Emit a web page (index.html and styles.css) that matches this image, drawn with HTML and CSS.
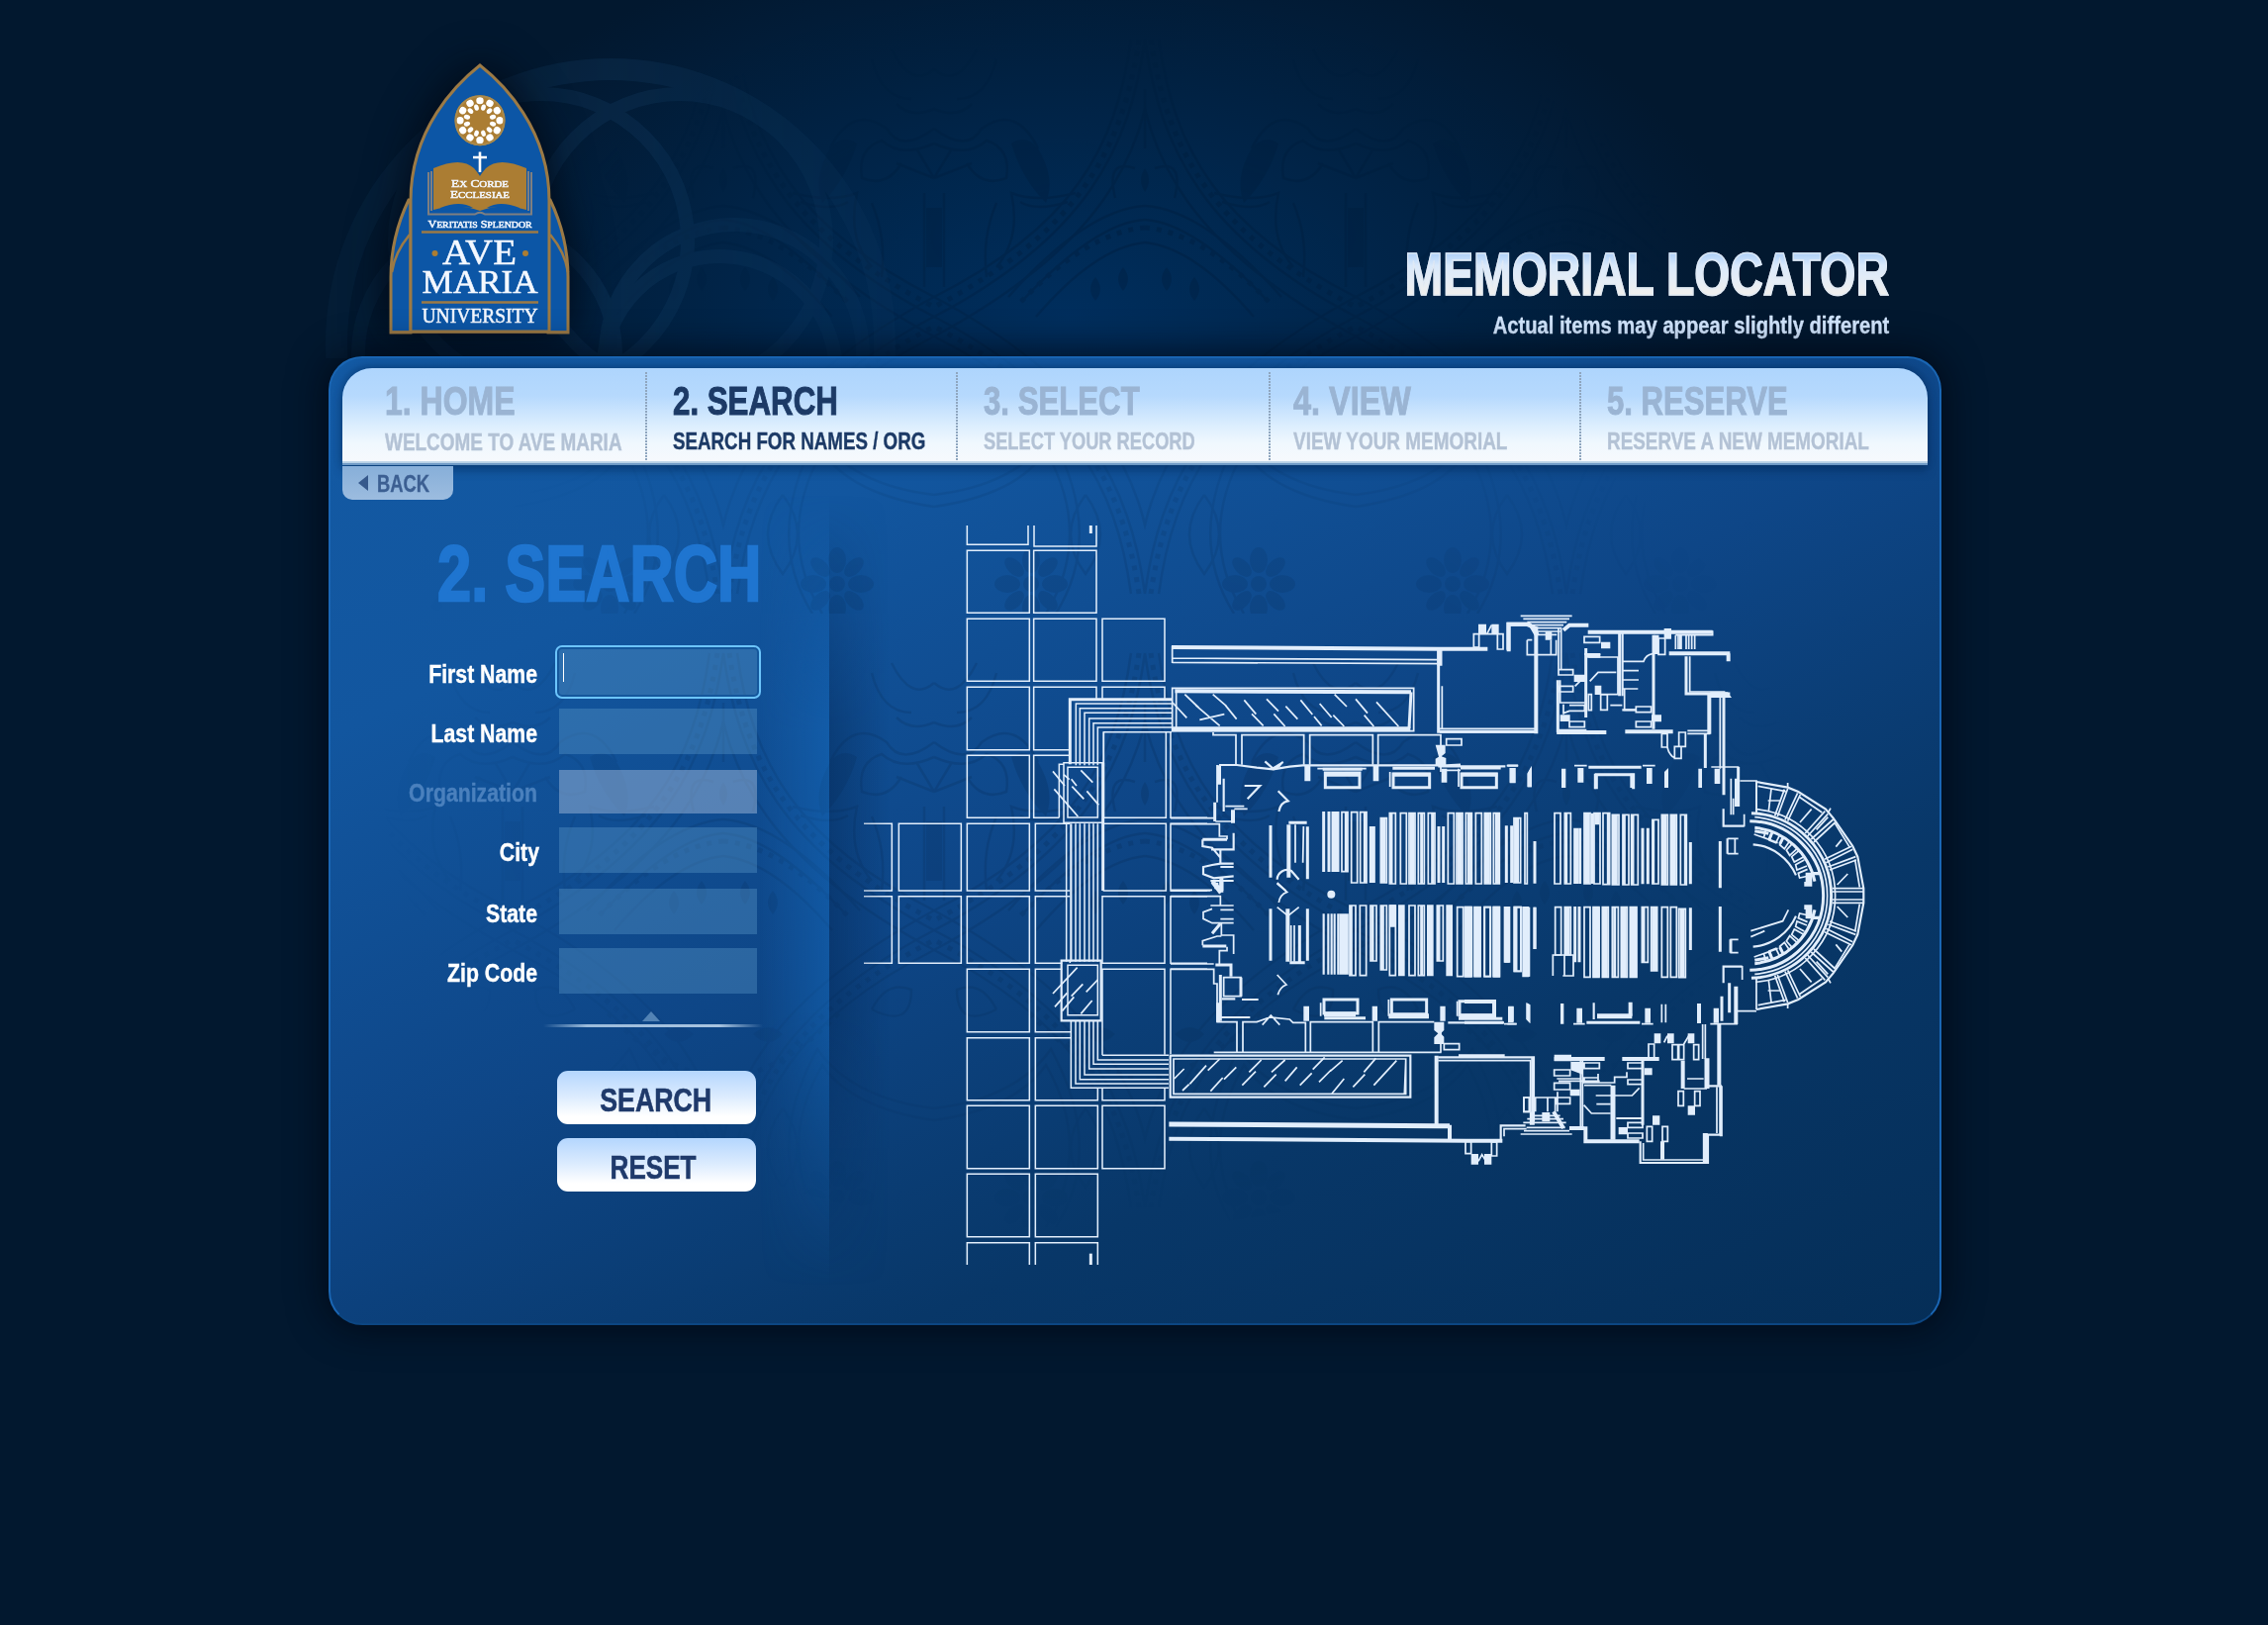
FILE: index.html
```html
<!DOCTYPE html>
<html lang="en">
<head>
<meta charset="utf-8">
<title>Memorial Locator</title>
<link rel="stylesheet" href="styles.css">
</head>
<body>
<svg class="backdrop" width="2292" height="1642" aria-hidden="true">
  <defs>
    <pattern id="damask" width="426" height="620" patternUnits="userSpaceOnUse" patternTransform="translate(731 0)">
      <g id="damask-half" class="damask-lines">
        <path d="M0 40C15 150 60 240 213 320C60 400 15 490 0 600M14 40C29 150 74 230 213 300M-8 60C1 160 46 250 213 340M14 600C29 490 74 410 213 340M-8 580C1 480 46 390 213 300"/>
        <path class="dots" d="M6 40C22 150 67 235 213 310M6 600C22 490 67 405 213 330M0 230Q60 235 130 310M0 470Q60 465 120 400"/>
        <path d="M0 208Q60 212 138 300M0 222Q50 225 125 305M0 245Q50 250 110 320M70 195Q110 205 135 195Q125 240 150 270M78 204Q110 214 126 204"/>
        <path d="M213 130Q180 155 165 130Q130 105 108 150M213 145Q180 160 160 142Q135 150 140 180Q165 190 180 165M213 180L195 150M213 180L175 165M203 195V290M150 205Q165 240 160 280M213 110Q190 120 175 105"/>
        <path d="M0 90V150M10 170Q40 160 30 200M170 50Q190 90 213 70M150 60Q160 100 190 100M60 500Q90 540 60 580Q30 540 60 500M150 400Q165 370 190 380Q190 420 150 400"/>
        <path d="M90 620Q40 540 95 440Q130 490 213 500M100 620Q52 540 100 456Q130 500 213 512"/>
        <g class="damask-fill">
          <circle cx="115" cy="590" r="8"/><ellipse cx="115" cy="566" rx="9" ry="13"/><ellipse cx="115" cy="614" rx="9" ry="13"/><ellipse cx="91" cy="590" rx="13" ry="9"/><ellipse cx="139" cy="590" rx="13" ry="9"/>
          <ellipse cx="115" cy="566" rx="7" ry="12" transform="rotate(45 115 590)"/><ellipse cx="115" cy="566" rx="7" ry="12" transform="rotate(135 115 590)"/><ellipse cx="115" cy="566" rx="7" ry="12" transform="rotate(225 115 590)"/><ellipse cx="115" cy="566" rx="7" ry="12" transform="rotate(315 115 590)"/>
          <path d="M108 150Q90 180 100 205Q125 180 135 145Q120 135 108 150ZM0 170q8 12 0 24zM22 270q10 12 0 24q-10-12 0-24M50 280q10 12 0 24q-10-12 0-24M205 210h8v60h-8zM30 425q16-14 30 0q-14 16-30 0"/>
        </g>
      </g>
      <use href="#damask-half" transform="translate(426 0) scale(-1 1)"/>
    </pattern>
    <pattern id="panel-pattern" href="#damask" patternTransform="translate(397 -362)"/>
    <clipPath id="header-clip"><rect width="2292" height="362"/></clipPath>
    <radialGradient id="fade"><stop offset="0" stop-color="#fff"/><stop offset=".5" stop-color="#aaa"/><stop offset="1" stop-color="#000"/></radialGradient>
    <linearGradient id="rose-fade" x1="0" y1="0" x2="1" y2="0"><stop offset="0" stop-color="#777"/><stop offset=".5" stop-color="#fff"/><stop offset="1" stop-color="#666"/></linearGradient>
    <mask id="header-mask"><ellipse cx="1130" cy="240" rx="560" ry="230" fill="url(#fade)"/></mask>
    <mask id="rose-mask"><rect x="320" y="40" width="600" height="330" fill="url(#rose-fade)"/></mask>
  </defs>
  <g clip-path="url(#header-clip)">
    <rect class="header-damask" width="2292" height="362" fill="url(#damask)" mask="url(#header-mask)"/>
    <g mask="url(#rose-mask)">
      <g class="rose" transform="translate(617 347)">
        <circle r="277" stroke-width="22"/>
        <g stroke-width="14">
          <circle cx="-70" cy="-104" r="148"/><circle cx="70" cy="-104" r="148"/><circle cx="125" cy="10" r="130"/><circle cx="-125" cy="10" r="130"/><circle cx="110" cy="30" r="118"/>
        </g>
      </g>
    </g>
  </g>
</svg>

<div class="stage">
  <header class="header">
    <svg class="logo" viewBox="390 60 190 282" width="190" height="282" role="img" aria-label="Ave Maria University">
      <defs>
        <g id="petals"><ellipse cy="-20" rx="3.700" ry="3.600"/><ellipse cy="-13.500" rx="2.300" ry="3.200" transform="rotate(15)"/></g>
      </defs>
      <path class="arch" d="M413 202C402 225 395 250 395 280V336H415V202ZM556 202C567 225 574 250 574 280V336H554V202Z"/>
      <path class="arch" d="M485 66C462 84 415 130 415 203V335H555V203C555 130 508 84 485 66Z"/>
      <path class="gold-line" d="M414 237Q399 255 396 275M556 237Q571 255 574 275M394 335.500H575"/>
      <g transform="translate(485 121.700)">
        <circle class="gold" r="25.500"/>
        <g class="white">
          <use href="#petals"/><use href="#petals" transform="rotate(30)"/><use href="#petals" transform="rotate(60)"/><use href="#petals" transform="rotate(90)"/><use href="#petals" transform="rotate(120)"/><use href="#petals" transform="rotate(150)"/><use href="#petals" transform="rotate(180)"/><use href="#petals" transform="rotate(210)"/><use href="#petals" transform="rotate(240)"/><use href="#petals" transform="rotate(270)"/><use href="#petals" transform="rotate(300)"/><use href="#petals" transform="rotate(330)"/>
        </g>
        <circle class="gold-ring" r="24.500"/>
      </g>
      <path class="book-edge" d="M433 174V216.500H480Q485 213 490 216.500H537V174M436 173V213M534 173V213"/>
      <path class="gold" d="M438 170Q466 158 479 170Q484 176 485 178Q486 176 491 170Q504 158 532 170V212Q505 205 485 213Q465 205 438 212Z"/>
      <path class="blue" d="M445 210Q465 202 478 210Q462 208 445 213ZM525 210Q505 202 492 210Q508 208 525 213Z"/>
      <path class="cross" d="M485 153.500V174M478 159H492"/>
      <g class="crest-text">
        <text x="485" y="189" font-size="11" textLength="58" lengthAdjust="spacingAndGlyphs">E<tspan font-size="9">X</tspan> C<tspan font-size="9">ORDE</tspan></text>
        <text x="485" y="200" font-size="11" textLength="60" lengthAdjust="spacingAndGlyphs">E<tspan font-size="9">CCLESIAE</tspan></text>
        <text x="485" y="229.500" font-size="11" textLength="105" lengthAdjust="spacingAndGlyphs">V<tspan font-size="9">ERITATIS</tspan> S<tspan font-size="9">PLENDOR</tspan></text>
        <text x="484.500" y="267" font-size="35" textLength="75" lengthAdjust="spacingAndGlyphs">AVE</text>
        <text x="485" y="295.500" font-size="33" textLength="117" lengthAdjust="spacingAndGlyphs">MARIA</text>
        <text x="485" y="326" font-size="20.500" textLength="117" lengthAdjust="spacingAndGlyphs">UNIVERSITY</text>
      </g>
      <path class="gold-line" d="M426 234.500H544M426 305.500H544"/>
      <circle class="gold" cx="439.500" cy="256" r="3"/><circle class="gold" cx="531" cy="256" r="3"/>
    </svg>
    <div class="titles">
      <h1 class="title">MEMORIAL LOCATOR</h1>
      <p class="subtitle">Actual items may appear slightly different</p>
    </div>
  </header>

  <main class="panel">
    <svg class="panel-damask" aria-hidden="true"><defs><radialGradient id="pfade"><stop offset="0" stop-color="#fff"/><stop offset=".55" stop-color="#aaa"/><stop offset="1" stop-color="#000"/></radialGradient><mask id="pmask"><ellipse cx="760" cy="420" rx="720" ry="470" fill="url(#pfade)"/></mask></defs><rect width="1626" height="975" fill="url(#panel-pattern)" mask="url(#pmask)"/></svg>
    <nav class="steps">
      <a class="step step-home"><strong>1. HOME</strong><span>WELCOME TO AVE MARIA</span></a>
      <a class="step step-search active"><strong>2. SEARCH</strong><span>SEARCH FOR NAMES / ORG</span></a>
      <a class="step step-select"><strong>3. SELECT</strong><span>SELECT YOUR RECORD</span></a>
      <a class="step step-view"><strong>4. VIEW</strong><span>VIEW YOUR MEMORIAL</span></a>
      <a class="step step-reserve"><strong>5. RESERVE</strong><span>RESERVE A NEW MEMORIAL</span></a>
    </nav>
    <div class="content">
      <section class="finder">
        <a class="back"><i class="back-arrow"></i><span>BACK</span></a>
        <h2 class="heading">2. SEARCH</h2>
        <form class="form">
          <div class="row focus"><label>First Name</label><div class="field"><i class="caret"></i></div></div>
          <div class="row"><label>Last Name</label><div class="field"></div></div>
          <div class="row disabled"><label>Organization</label><div class="field"></div></div>
          <div class="row city"><label>City</label><div class="field"></div></div>
          <div class="row state"><label>State</label><div class="field"></div></div>
          <div class="row"><label>Zip Code</label><div class="field"></div></div>
          <div class="fold"><i class="fold-arrow"></i><i class="fold-line"></i></div>
          <div class="actions">
            <button type="button"><span>SEARCH</span></button>
            <button type="button" class="reset"><span>RESET</span></button>
          </div>
        </form>
      </section>

      <svg class="plan" viewBox="860 520 1040 770" width="1040" height="770" role="img" aria-label="Church floor plan">
        <!-- west plaza, upper half -->
        <g transform="translate(860 520) scale(.33333)">
          <path class="tile" d="M352 33V91H537V33M555 33V96H744V33M352 109H541V298H352ZM554 109H744V298H554ZM352 316H541V505H352ZM554 316H744V505H554ZM762 316H951V505H762ZM352 523H541V713H352ZM664 713H554V523H744V558M762 558V523H951V558M352 730H541V919H352ZM664 730H554V919H631M39 937H124V1140H39M145 937H334V1140H145ZM352 937H541V1140H352ZM664 937H559V1140H664M766 659V919H955V659M969 659V919H1080M764 937H955V1140H764M1080 937H969V1140H1080"/>
          <path class="tile" d="M682 760V573H972M694 760V587H972M708 760V601H972M722 760V618H972M735 760V632H972M748 760V645H972M766 919V659H972M645 752H764V934H645ZM657 766H748V918H657ZM645 757H631V919M653 937V1355M681 937V1355M694 937V1355M708 937V1355M722 937V1355M735 937V1355M748 937V1355"/>
          <path class="w8" d="M664 757V560H972M727 33V57M764 752V1140"/>
          <path class="w6" d="M667 937V1355"/>
          <path d="M612 778L648 822M645 788L662 803M668 802L684 822M697 775L733 812M616 832L688 915M670 824L706 862M715 838L751 880"/>
        </g>
        <!-- west plaza, lower half -->
        <g transform="translate(860 900) scale(.33333)">
          <path class="tile" d="M39 17H124V220H39M145 17H334V220H145ZM352 17H541V220H352ZM664 17H559V220H640M762 17H951V220H762ZM1080 17H969V220H1080M352 238H541V428H352ZM640 238H559V428H667M762 499V238H951V497M969 495V238H1080M352 446H541V635H352ZM667 446H559V635H748V600M762 600V635H951V600M352 652H541V842H352ZM559 652H748V842H559ZM762 652H951V842H762ZM352 859H541V1049H352ZM559 859H748V1049H559ZM352 1134V1067H541V1134M559 1134V1067H748V1134"/>
          <path class="tile" d="M667 396V598H963M681 396V585H963M694 396V572H963M708 396V558H963M722 396V540H963M735 396V526H963M748 396V513H963M762 499H963M657 226H748V377H657ZM664 219V212"/>
          <path class="w6" d="M638 212H758V394H638Z"/><path class="w8" d="M727 1100V1134"/>
          <path d="M612 312L686 233M668 320L703 283M713 307L748 270M618 352L655 310M640 365L676 322M697 373L731 333"/>
        </g>
        <!-- north aisle and nave -->
        <g transform="translate(1170 600) scale(.33333)">
          <path d="M44 158V210M44 195L848 200M44 208L848 212M862 280V408M850 409H1145M44 286H776V416H44ZM56 300V408M168 420V428H237V518M255 518V428H443V518M461 518V428H652V518M668 518V428H858V540M39 680H172M39 698H187V735H210V745M39 898H165M180 519V632M205 644H262M232 652H272M175 690H232M417 700V815M442 705L440 815M855 420H1150M875 440H921V459H875ZM958 122H974V162H958ZM1030 122H1047V168H1030ZM974 122H1030M998 122L1012 95M484 530H632M704 585V540M912 585V530M875 535H918"/>
          <path class="w6" d="M186 519H240L300 527L350 532L400 524L440 520H845L875 520L918 518M200 560V660M325 508L352 532L380 510M263 582H310L272 622M365 598L395 628Q372 632 367 660M362 866A30 30 0 0 1 405 840L428 866M362 878L388 900M850 523H1054M1060 521H1092M136 745V765L165 770L190 800M162 775H230V725M190 775V818H230M190 828H230M190 818L165 822L138 828V850L170 862L230 856M160 870H230"/>
          <path class="w8" d="M851 165V418H1150M768 298L762 408M136 745H210M173 632V690M397 694H452M454 706V865M342 702V860M508 543H612V587H508ZM714 546H824V587H714ZM921 546H1027V587H921ZM712 529H840M918 528H1040M500 532H620"/>
          <path class="w11" d="M42 162L850 167H1000M52 295L768 298M1147 100V424M397 700V860M1064 175V92H1118L1147 105M186 520V578M228 655V695M193 860V900M165 872L190 896M505 548H614M712 548H826M919 548H1030"/>
          <path class="w14" d="M42 410H766M855 165V218"/>
          <path class="solid" d="M972 92h24v30h-24zM1012 92h22v30h-22zM445 522h18v46h-18zM653 520h17v48h-17zM860 530h17v42h-17zM1067 528h17v44h-17zM1122 545L1134 522V586H1122ZM842 458h30v25l-12 10l14 5v22h-32v-20l10-6zM345 528L380 507Q375 530 350 535Z"/>
          <path d="M82 305L124 345M115 338L188 400M167 305L208 340M205 338L239 380M262 322L298 365M285 364L320 400M330 319L366 356M352 364L386 402M388 341L424 380M433 322L469 366M474 372L497 400M491 333L527 375M532 368L565 402M536 305L573 342M600 319L636 362M626 368L655 402M663 328L730 402M127 382L202 365M45 330L88 376"/>
          <path d="M558 662h18v180h-18zM587 662h18v214h-18zM614 662h19v214h-19zM676 680h18v196h-18zM703 665h18v214h-18zM736 665h18v214h-18zM762 665h18v214h-18zM790 665h18v214h-18zM820 665h20v214h-20zM880 665h18v214h-18zM906 665h18v214h-18zM934 665h18v214h-18zM964 665h18v214h-18zM991 665h18v214h-18zM1018 665h18v214h-18zM1080 680h20v196h-20zM1113 665h7v214h-7z"/>
          <path class="w8" d="M503 660V843M519 660V843M655 705V876M646 705V876M852 705V876M866 705V876M1057 703V876M1073 703V876M1143 750V878M708 665V879M628 662V876M800 665V879M833 665V879M571 662V842"/>
          <path class="w14" d="M534 660V843M543 660V843M771 665V879M915 665V879M946 665V879M1000 665V879M1030 665V879M684 680V876M1088 680V876"/>
        </g>
        <!-- north-east rooms -->
        <g transform="translate(1480 600) scale(.33333)">
          <path d="M170 67H326M178 76H318M190 86H310M200 95H300M210 104H295M215 114H290M222 124H280M190 140H205M190 140V185H278V140M262 140V185M285 105V230M293 105V230M363 130H410V148H363ZM376 192H465V305H410M480 205H543Q550 185 570 182M480 233H528M480 261H528M480 288H526M485 288V352H520M588 135H608V184H588ZM752 112V125H640M640 125V168M648 125V168M672 125V168M680 125V168M689 125V168M698 125V168M683 190V297H790M775 315V530M676 415H745M676 424H745M290 262V330H365M285 230H329V246H285ZM285 280H329V297H285ZM335 280L350 265M380 265L405 238H460M376 305H385V353H376ZM413 306H433V352H413ZM442 338H478M300 335V365M318 338H364V355H318L300 362M318 387H364V404H318ZM520 342H566V359H520ZM520 387H566V404H520ZM598 424H615V465H598ZM650 420H670V463H650ZM637 463H657V499H637ZM615 465Q620 490 637 497M333 521H371M540 521H578M128 521H163M748 525H832M835 567H885V665M395 592V545M797 742H830M797 788H830M820 742V788M808 560V670M815 620V670M848 668V706"/>
          <path class="w6" d="M785 652V704H848M479 120V310M797 742V788M478 352H520M363 183H412"/>
          <path class="w8" d="M368 165V375M470 120V310M573 125V410M672 190V303H805M786 315V545M730 425V528M283 262V420M400 592V548H512V592M775 750V892M376 526H536M786 530V610M655 125V168M830 525V645"/>
          <path class="w11" d="M133 170V92H195L217 110M300 110L318 95H376M374 116H752M620 181H805M742 305V425M487 418H632M280 420H430M800 181V205M372 188H412M825 560V645M508 545V588"/>
          <path class="w14" d="M582 125V183M280 418H370M205 100L220 125"/>
          <path class="solid" d="M245 115h20v25h-20zM414 146h28v20h-28zM605 105h22v32h-22zM332 245h38v22h-38zM395 278h20v28h-20zM290 367h30v20h-30zM567 367h30v21h-30zM137 528h18v46h-18zM190 545L203 522V586H190ZM294 530h13v58h-13zM343 528h18v44h-18zM552 528h17v48h-17zM606 540L618 528V588H606ZM709 530h11v58h-11zM758 530h17v46h-17zM745 298H798L810 315H745Z"/>
          <path d="M273 665h18v214h-18zM304 665h18v214h-18zM363 665h18v214h-18zM393 665h18v214h-18zM420 665h20v216h-20zM448 670h20v212h-20zM480 670h18v212h-18zM506 670h20v212h-20zM570 685h18v194h-18zM598 670h18v212h-18zM625 670h18v212h-18zM655 670h18v212h-18z"/>
          <path class="w8" d="M308 665V879M350 710V879M388 665V879M436 665V881M540 710V880M556 710V880M572 685V880M685 753V880M484 670V882M670 670V882M510 670V882"/>
          <path class="w14" d="M338 710V879M371 665V879M457 670V882M606 670V882M634 670V882M402 665V700"/>
        </g>
        <!-- south aisle and nave -->
        <g transform="translate(1170 890) scale(.33333)">
          <path d="M39 30H160M39 47H190V75M160 75H230M190 88H230M190 116H230M165 85L138 95V115L165 128H230M193 128V165H230V222M136 196V182L180 168H193M187 252V212H210V200M39 252H170M39 268H170V312H180V428M200 293H252V350H200ZM178 428H240V520M258 520V428H300L340 414L400 420L410 430H448V520M463 520V428H652V520M670 520V428H838M858 440V520M170 520H860M317 437L343 408L370 437M362 6L392 34Q370 42 367 66M362 80L395 106L428 80M362 285L390 315Q370 322 364 346M404 135V245M414 135V245M494 410V370M700 410V360M908 410V365M868 494H914V512H868ZM850 545H1130V700M1050 775V752H1118M933 790H950V827H933ZM1012 792H1028V834H1012ZM972 850L983 830L995 850M1110 657H1128V700H1110ZM1060 434H1088M48 540H752V646H48ZM752 545L748 646"/>
          <path class="w6" d="M38 530H766V656H38ZM850 535H1140V730M195 358H235M255 360H305M180 414H280M912 529H1052M880 430H1050M1040 788V742H1115"/>
          <path class="w8" d="M342 85V242M430 135V245M400 248H446M454 85V242M190 285V425M175 255H222V290M252 293V350M504 360H606V402H504ZM709 360H815V404H709ZM915 365H1021V408H915ZM505 416H630M912 418H1045M165 160L190 130M165 5L190 38M136 198H208"/>
          <path class="w11" d="M34 782L935 788H1045M885 740V785M394 85V245M845 530V740M193 0V35M183 370V428M178 5V25"/>
          <path class="w14" d="M34 738L850 743H885M700 410H822M915 410H1021M504 404H600"/>
          <path class="solid" d="M442 380h17v45h-17zM650 380h16v45h-16zM856 380h16v45h-16zM1063 380h16v46h-16zM1118 370L1129 376V432L1118 420ZM838 428h30v25l-10 10l10 10v22h-30v-20l12-12l-12-10zM950 828h22v32h-22zM990 828h22v32h-22z"/>
          <circle class="solid" cx="526" cy="41" r="12"/>
          <path d="M50 600L80 570M75 636L95 617M97 616L147 560M152 575L188 540M160 638L197 597M201 602L238 565M256 620L297 578M277 580L314 543M322 625L359 587M345 580L386 543M386 607L422 565M431 620L467 583M470 572L506 535M489 610L526 573M523 577L560 545M528 645L565 600M592 625L628 587M625 580L661 538M655 620L724 545"/>
          <path d="M582 75h18v212h-18zM613 75h19v212h-19zM645 75h18v168h-18zM676 75h18v195h-18zM703 75h18v212h-18zM762 75h18v212h-18zM790 75h18v212h-18zM847 75h18v168h-18zM908 80h18v210h-18zM932 80h20v210h-20zM990 80h18v210h-18zM1018 80h18v210h-18zM1081 80h20v194h-20z"/>
          <path class="w6" d="M503 100V284M517 100V284M527 100V284M536 100V284M547 100V284"/>
          <path class="w8" d="M574 100V284M586 75V287M651 75V243M682 75V270M800 75V287M1143 80V207M852 75V243M1124 80V290M1086 80V274"/>
          <path class="w18" d="M560 100V284M739 73V289M826 73V289M884 73V289M970 78V292M1028 78V292M1059 78V248M1115 78V292M712 73V140M942 78V292"/>
        </g>
        <!-- south-east rooms -->
        <g transform="translate(1480 890) scale(.33333)">
          <path d="M170 768H326M180 758H318M188 748H305M178 733H308M190 722H300M200 712H290M180 657H196V700H180ZM215 700V657H275V700M252 657V700M282 640V700M352 545V745M358 545V745M272 573H320V591H272ZM272 613H320V633H272ZM280 657H320V676H280ZM363 552H409V569H363ZM280 600H350M285 607H410M363 597H405V612H363ZM363 620H445M405 585V612H455V595H492V580M495 552H540V569H495ZM495 603H540V617H495ZM398 651H508L530 628M400 677H443M362 680L385 705H443M495 733H540V748H495ZM495 765H540V780H495ZM558 495H575V540H558ZM630 497H647V542H630ZM650 497H665V542H650ZM695 497H710V542H695ZM605 490L615 470M665 495L680 470M722 435V540M730 435V540M675 600H725M665 630H735M648 638H664V682H648ZM698 638H714V682H698ZM553 745H569V790H553ZM600 745H616V790H600ZM120 434H158M330 434H365M537 434H572M598 374V430M610 374V430M745 434H828M828 395H885M805 178H830M805 218H830M868 152L965 122L982 88M868 170L910 152M542 795V846H735M765 765V625M842 258V300M268 288V225H330V288H298M303 225V288"/>
          <path class="w6" d="M785 310V260H842M392 370V420M460 720H540M725 770H775V620M205 535V730M533 790V855H738V770M740 622H780"/>
          <path class="w8" d="M778 622V775M775 78V215M807 178V218M780 350V425M803 310V400M0 430H118M370 430H532M540 545V740"/>
          <path class="w11" d="M367 745V790H530M478 540H590M272 540H425M772 435V620M318 750H362M600 790V845M662 545V630M503 368V410M0 366H90V410H0M270 700L300 750M823 320V435"/>
          <path class="w14" d="M730 765V858M735 538V630M450 620V785M402 410H508M205 700V740"/>
          <path class="solid" d="M272 527h52v20h-52zM322 548h38v40l-38-14zM320 632h30v20h-30zM235 702h24v28h-24zM545 568h24v21h-24zM467 747h28v22h-28zM575 463h20v30h-20zM615 463h20v30h-20zM677 463h20v30h-20zM677 682h22v28h-22zM570 712h22v28h-22zM132 382h17v48h-17zM187 370L199 376V432L187 420ZM291 372h10v62h-10zM340 386h17v45h-17zM547 386h17v45h-17zM705 372h12v60h-12zM755 386h16v45h-16z"/>
          <path d="M2 80h18v210h-18zM30 80h18v210h-18zM61 80h18v210h-18zM88 80h18v210h-18zM151 80h20v194h-20zM275 80h18v145h-18zM304 80h18v145h-18zM363 80h18v212h-18zM390 80h18v212h-18zM418 80h18v212h-18zM448 80h18v212h-18zM475 80h18v212h-18zM502 80h20v212h-20zM538 80h18v167h-18zM566 80h18v193h-18zM598 80h18v212h-18zM625 80h18v212h-18zM650 85h20v208h-20z"/>
          <path class="w8" d="M213 80V207M685 82V210M335 78V247M348 78V247M194 80V290M406 80V292M543 80V247M455 80V292M518 80V292"/>
          <path class="w14" d="M129 78V248M184 78V290M312 80V225M397 80V292M427 80V292M484 80V292M511 80V292M575 80V273M660 85V293M37 80V290M98 80V290"/>
        </g>
        <!-- apse -->
        <g transform="translate(1767.300 905) scale(.33333)">
          <g id="apse-half">
            <path class="w6" d="M23 -345L118 -328L150 -315L233 -262L256 -235L315 -150L330 -118L348 -22V0"/>
            <path d="M28 -332L112 -316M152 -300L222 -252M262 -218L305 -148M322 -110L336 -26M87 -240L118 -324M79 -242L108 -322M110 -230L148 -311M118 -226L156 -306M171 -189L231 -256M178 -180L240 -248M189 -171L256 -231M197 -162L262 -222M230 -110L311 -149M234 -100L315 -140M240 -87L324 -118M245 -78L326 -108M254 -22H350M254 -12H350M60 -255L68 -322M58 -288H98M155 -222L190 -262M205 -200L240 -238M268 -33L300 -66M264 -148L282 -170M118 -328V-342M240 -250L248 -265"/>
            <path class="w8" d="M8 -250A250 250 0 0 1 250 0M3 -226A226 226 0 0 1 226 0"/>
            <path d="M20 -262A262 262 0 0 1 262 0M18 -238A238 238 0 0 1 238 0"/>
            <path class="w8" d="M18 -206A206 206 0 0 1 200 -43"/>
            <path class="w6" d="M13 -155A155 155 0 0 1 143 -62"/>
            <path d="M16 -186L62 -170L88 -160M52 -200L46 -178M72 -192L62 -168L82 -160L94 -184M106 -178L94 -154L108 -142L124 -166M132 -158L114 -138L124 -122L146 -142M152 -136L130 -118L138 -102L164 -116M168 -108L142 -94L146 -78L176 -90M178 -80L150 -68L154 -54L182 -60"/>
            <path class="w8" d="M18 -196L60 -188M62 -170L70 -190M94 -156L104 -176"/>
            <path class="solid" d="M172 -70h20v42h-24v-14h4zM190 -72h26v10h-26z"/>
            <path d="M23 -345V-250"/>
          </g>
          <use href="#apse-half" transform="scale(1 -1)"/>
        </g>
      </svg>
    </div>
  </main>
</div>
</body>
</html>
```

FILE: styles.css
```css
* { box-sizing: border-box; }

body {
  margin: 0;
  min-height: 1642px;
  position: relative;
  overflow: hidden;
  background:
    radial-gradient(ellipse 700px 400px at 1080px 320px, #002e5d 0%, rgba(0, 42, 84, .8) 40%, rgba(2, 25, 49, 0) 100%),
    #02182f;
  font-family: "Liberation Sans", Arial, sans-serif;
  font-weight: bold;
}

h1, h2, p { margin: 0; }
i { display: block; }

.backdrop { position: absolute; inset: 0; }
.damask-lines { fill: none; stroke: #00152f; stroke-width: 2.5; }
.damask-lines .dots { stroke-width: 5; stroke-dasharray: 5 7; }
.damask-fill { fill: #00152f; stroke: none; }
.header-damask { opacity: .26; }
.rose { fill: none; stroke: #1c4a74; opacity: .22; }

.stage {
  position: relative;
  width: 1630px;
  margin-left: 332px;
}

/* Header */
.header {
  height: 360px;
  padding: 60px 53px 0 58px;
  display: flex;
  justify-content: space-between;
}
.logo { overflow: visible; filter: drop-shadow(0 0 22px rgba(0, 5, 15, .9)); }
.arch { fill: #0c56a6; stroke: #9c7a45; stroke-width: 3; }
.gold-line { fill: none; stroke: #9c7a45; stroke-width: 2.6; }
.gold { fill: #ab7d33; }
.gold-ring { fill: none; stroke: #ab8a4c; stroke-width: 2; }
.blue { fill: #0c56a6; }
.white { fill: #fff; }
.book-edge { fill: none; stroke: #7f7f80; stroke-width: 2; }
.cross { fill: none; stroke: #fff; stroke-width: 2.6; }
.crest-text { font-family: "Liberation Serif", serif; font-weight: normal; fill: #f4f8ff; stroke: #f4f8ff; stroke-width: .5; text-anchor: middle; }

.titles { padding-top: 187px; display: flex; flex-direction: column; align-items: flex-end; }
.title, .subtitle { white-space: nowrap; transform-origin: right top; }
.title {
  font-size: 61px;
  line-height: 61px;
  transform: scaleX(.76);
  background: linear-gradient(#a9cdf8 12%, #d9e9fb 35%, #e6edf5 62%, #f2f0ec 85%);
  -webkit-background-clip: text;
  background-clip: text;
  color: transparent;
  -webkit-text-stroke: 1.6px rgba(224, 234, 245, .85);
}
.subtitle {
  margin-top: 10px;
  font-size: 23px;
  line-height: 23px;
  color: #d3e7ff;
  transform: scaleX(.878);
  -webkit-text-stroke: .3px #d3e7ff;
}

/* Panel */
.panel {
  position: relative;
  height: 979px;
  border: 2px solid #1a66b4;
  border-bottom-color: #0c4682;
  border-radius: 34px;
  background: linear-gradient(155deg, #135aa4 0%, #12569f 22%, #0e4687 48%, #083768 72%, #052e57 100%);
  box-shadow: 0 0 36px 4px rgba(0, 6, 16, .7);
}
.panel-damask { position: absolute; left: 0; top: 0; width: 1626px; height: 975px; opacity: .15; }

.steps {
  position: relative;
  margin: 10px 12px 0;
  height: 98px;
  display: grid;
  grid-template-columns: 308px 314px 316px 314px 1fr;
  border-radius: 30px 30px 0 0;
  background: linear-gradient(#aed5fd 0, #b6d9fd 28px, #dceefe 58px, #f0f8fe 76px, #f6f9fd 94px, #c3d8ea 94px, #b2cde4 96px, #6f9ac6 96px);
  box-shadow: 0 -3px 8px rgba(3, 35, 75, .35), 0 6px 10px rgba(3, 35, 75, .4);
}
.step {
  padding-top: 13px;
  background: repeating-linear-gradient(#8fa6bf 0 2px, transparent 2px 3px) no-repeat right 4px / 2px 90px;
  color: #9ab4d3;
  white-space: nowrap;
}
.step:last-child { background: none; }
.step strong, .step span { display: block; transform-origin: left top; }
.step strong { font-size: 40.500px; line-height: 41px; -webkit-text-stroke: 1px currentColor; }
.step span { margin-top: 8px; font-size: 23.500px; line-height: 24px; color: #b3c2d5; -webkit-text-stroke: .4px currentColor; }
.step.active, .step.active span { color: #1c3a66; }
.step-home { padding-left: 43px; }
.step-home span { margin-top: 9px; transform: scaleX(.806); }
.step-home strong { transform: scaleX(.79); }
.step-search { padding-left: 26px; }
.step-search strong { transform: scaleX(.772); }
.step-search span { transform: scaleX(.798); }
.step-select { padding-left: 26px; }
.step-select strong { transform: scaleX(.77); }
.step-select span { transform: scaleX(.777); }
.step-view { padding-left: 23px; }
.step-view strong { transform: scaleX(.8); }
.step-view span { transform: scaleX(.806); }
.step-reserve { padding-left: 26px; }
.step-reserve strong { transform: scaleX(.768); }
.step-reserve span { transform: scaleX(.804); }

.content { position: relative; display: flex; height: 867px; }

/* Search column */
.finder { width: 504px; position: relative; }
.finder::before,
.finder::after {
  content: "";
  position: absolute;
  top: 30px;
  height: 800px;
  width: 70px;
  -webkit-mask-image: linear-gradient(transparent, #000 30%, #000 65%, transparent);
  mask-image: linear-gradient(transparent, #000 30%, #000 65%, transparent);
}
.finder::before { right: 0; background: linear-gradient(to left, rgba(22, 112, 198, .42), transparent); }
.finder::after { left: 100%; width: 60px; background: linear-gradient(to right, rgba(3, 38, 82, .42), transparent); }

.back {
  display: flex;
  align-items: center;
  width: 112px;
  height: 34px;
  margin: 1px 0 0 12px;
  padding-left: 16px;
  border-radius: 0 0 10px 10px;
  background: linear-gradient(#87afd9, #9cbcdf);
  color: #3c5f92;
  font-size: 23px;
  line-height: 34px;
}
.back-arrow { border: 8px solid transparent; border-right: 10px solid #36598c; border-left: 0; }
.back span { margin-left: 9px; padding-top: 1px; transform: scaleX(.8); transform-origin: left; -webkit-text-stroke: .3px currentColor; }

.heading {
  margin: 35px 0 0 108px;
  font-size: 79.500px;
  line-height: 80px;
  color: #1f75d0;
  white-space: nowrap;
  transform: scaleX(.772);
  transform-origin: left;
  -webkit-text-stroke: 2.500px #1f75d0;
}

.form { position: relative; z-index: 1; margin-top: 36px; display: flex; flex-direction: column; gap: 14px; }
.row { display: flex; gap: 22px; height: 46px; }
.row.state { margin-top: 2px; }
.row label {
  width: 209px;
  padding-top: 10px;
  text-align: right;
  font-size: 25px;
  line-height: 30px;
  color: #fff;
  white-space: nowrap;
  transform: scaleX(.85);
  transform-origin: right;
  -webkit-text-stroke: .4px currentColor;
}
.row.city label { position: relative; left: 2px; }
.field { width: 200px; background: rgba(98, 158, 205, .36); }
.focus .field { padding: 4px; box-shadow: 0 0 0 2px #14579c; outline: 2px solid #6cc4fb; outline-offset: 2px; border-radius: 3px; }
.caret { width: 1px; height: 29px; background: #fff; }
.disabled label { color: #4a80bd; }
.disabled .field { margin-top: 2px; background: rgba(158, 184, 218, .5); }

.fold { display: flex; flex-direction: column; align-items: center; gap: 3px; width: 222px; margin: 4px 0 0 215px; }
.fold-arrow { margin-right: 5px; border: 9.500px solid transparent; border-bottom: 10px solid #5283b5; border-top: 0; }
.fold-line { width: 222px; height: 3px; background: linear-gradient(to right, transparent, #9cbcdc 20%, #a8c4e0 80%, transparent); }

.actions { margin: 30px 0 0 229px; display: flex; flex-direction: column; gap: 14px; }
.actions button {
  width: 201px;
  height: 54px;
  padding: 0;
  border: 0;
  border-radius: 11px;
  background: linear-gradient(#b4d6fe, #d9eafe 45%, #fff 85%);
  font: bold 33px/54px "Liberation Sans", Arial, sans-serif;
  color: #1f3a6b;
}
.actions span { display: inline-block; position: relative; left: -1px; top: 3px; transform: scaleX(.81); -webkit-text-stroke: .6px currentColor; }
.actions .reset span { left: -3px; transform: scaleX(.79); }

/* Floor plan */
.plan { margin: 50px 0 0 22px; fill: none; stroke: #e2eefc; stroke-width: 5.2; }
.plan .tile { stroke-width: 4.6; }
.plan .w6 { stroke-width: 6.5; }
.plan .w8 { stroke-width: 9; }
.plan .w11 { stroke-width: 12; }
.plan .w14 { stroke-width: 15; }
.plan .w18 { stroke-width: 20; }
.plan .solid { fill: #e2eefc; stroke: none; }
```
